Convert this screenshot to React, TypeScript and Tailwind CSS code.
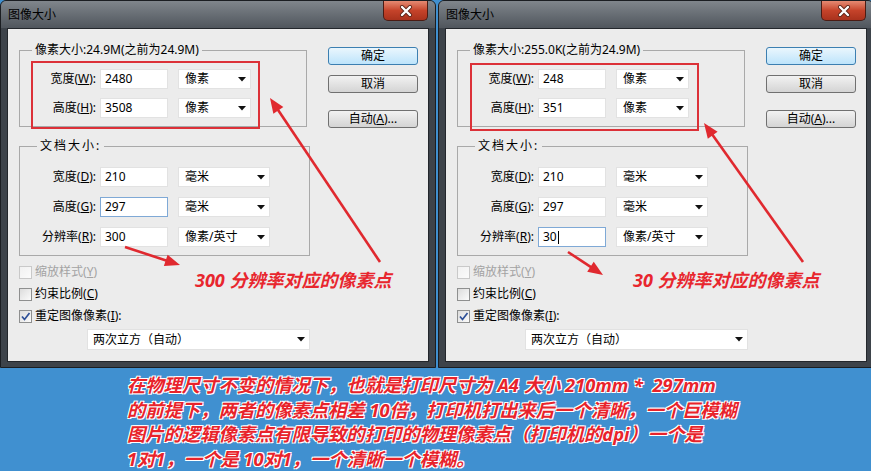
import React from 'react';

type Pt = [number, number];

const RED = '#e0292f';

const Arrow = ({ from, to }: { from: Pt; to: Pt }) => {
  const [x1, y1] = from;
  const [x2, y2] = to;
  const a = Math.atan2(y2 - y1, x2 - x1);
  const len = 15;
  const half = 6;
  const bx = x2 - len * Math.cos(a);
  const by = y2 - len * Math.sin(a);
  const px = -Math.sin(a) * half;
  const py = Math.cos(a) * half;
  return (
    <g>
      <line x1={x1} y1={y1} x2={bx + 2 * Math.cos(a)} y2={by + 2 * Math.sin(a)} stroke={RED} strokeWidth={2.6} />
      <polygon points={`${x2},${y2} ${bx + px},${by + py} ${bx - px},${by - py}`} fill={RED} />
    </g>
  );
};

const Caret = () => (
  <svg width="8" height="5" viewBox="0 0 8 5">
    <path d="M0 0 H8 L4 4.5 Z" fill="#111" />
  </svg>
);

const Select = ({ text, className }: { text: string; className: string }) => (
  <div className={`flex items-center justify-between h-[20px] bg-white border border-[#e2e2e2] pl-[6px] pr-[4px] ${className}`}>
    <span>{text}</span>
    <Caret />
  </div>
);

const Field = ({
  label,
  k,
  value,
  unit,
  unitW,
  focus,
  cursor,
}: {
  label: string;
  k: string;
  value: string;
  unit: string;
  unitW: string;
  focus?: boolean;
  cursor?: boolean;
}) => (
  <div className="flex items-center h-[20px]">
    <span className="w-[76px] text-right whitespace-nowrap">
      {label}(<u>{k}</u>):
    </span>
    <div
      className={`ml-[4px] w-[68px] h-[20px] bg-white flex items-center pl-[4px] border ${
        focus ? 'border-[#7fa9d6]' : 'border-[#e2e2e2]'
      }`}
    >
      {value}
      {cursor && <span className="ml-px w-px h-[13px] bg-black" />}
    </div>
    <Select text={unit} className={`ml-[10px] ${unitW}`} />
  </div>
);

const Check = ({ label, k, checked, disabled }: { label: string; k: string; checked?: boolean; disabled?: boolean }) => (
  <div className={`flex items-center h-[22px] ${disabled ? 'text-[#a3a3a3]' : ''}`}>
    <div
      className={`w-[13px] h-[13px] border bg-gradient-to-br from-[#dcdcdc] to-[#fbfbfb] flex items-center justify-center ${
        disabled ? 'border-[#c9c9c9] from-[#f1f1f1]' : 'border-[#8e8f8f]'
      }`}
    >
      {checked && (
        <svg width="11" height="11" viewBox="0 0 11 11">
          <path d="M2 5.5 L4.5 8.5 L9.5 2" stroke="#2d4f97" strokeWidth="1.7" fill="none" />
        </svg>
      )}
    </div>
    <span className="ml-[3px]">
      {label}(<u>{k}</u>){checked ? ':' : ''}
    </span>
  </div>
);

const Button = ({ children, primary, className }: { children: React.ReactNode; primary?: boolean; className?: string }) => (
  <div
    className={`w-[90px] h-[18px] rounded-[3px] border flex items-center justify-center ${
      primary
        ? 'border-[#3c7fb1] bg-gradient-to-b from-[#eaf6fd] to-[#bde4fb]'
        : 'border-[#707070] bg-gradient-to-b from-[#f2f2f2] to-[#d4d4d4]'
    } ${className ?? ''}`}
  >
    {children}
  </div>
);

type DialogProps = {
  size: string;
  w: string;
  h: string;
  res: string;
  note: string;
  long: [Pt, Pt];
  short: [Pt, Pt];
  box: [number, number];
  leftFocus?: boolean;
};

const Dialog = ({ size, w, h, res, note, long, short, box, leftFocus }: DialogProps) => (
  <div className="relative w-[436px] h-[368px] shrink-0 rounded-t-[6px] border border-[#1b1e22] bg-[#3d434a] flex flex-col">
    <div className="h-[27px] flex items-center pl-[7px] rounded-t-[5px] bg-gradient-to-b from-[#80868c] to-[#50565d]">
      <span className="text-[12px] text-black">图像大小</span>
    </div>
    <div className="absolute top-0 right-[7px] w-[45px] h-[20px] rounded-b-[5px] border border-t-0 border-[#4b1c14] bg-gradient-to-b from-[#e58a72] via-[#c5432a] to-[#a9321d] flex items-center justify-center">
      <svg width="14" height="12" viewBox="0 0 14 12">
        <path d="M3 2 L11 10 M11 2 L3 10" stroke="#5a2418" strokeWidth="4" strokeLinecap="round" />
        <path d="M3 2 L11 10 M11 2 L3 10" stroke="#fff" strokeWidth="2.4" strokeLinecap="round" />
      </svg>
    </div>
    <div className="mx-[6px] h-[334px] border border-[#23272c] bg-[#ececec] flex">
      <div className="w-[303px] pl-[11px] pt-[12px]">
        <fieldset className="w-[288px] border border-[#a9a9a9] pt-[10px] pb-[8px] flex flex-col gap-[9px]">
          <legend className="ml-[12px] px-[3px] leading-[18px]">像素大小:{size}(之前为24.9M)</legend>
          <Field label="宽度" k="W" value={w} unit="像素" unitW="w-[73px]" />
          <Field label="高度" k="H" value={h} unit="像素" unitW="w-[73px]" />
        </fieldset>
        <fieldset className="mt-[10px] w-[291px] border border-[#a9a9a9] pt-[12px] pb-[8px] flex flex-col gap-[10px]">
          <legend className="ml-[17px] px-[3px] leading-[18px] tracking-[2px]">文档大小:</legend>
          <Field label="宽度" k="D" value="210" unit="毫米" unitW="w-[92px]" />
          <Field label="高度" k="G" value="297" unit="毫米" unitW="w-[92px]" focus={leftFocus} />
          <Field label="分辨率" k="R" value={res} unit="像素/英寸" unitW="w-[92px]" focus={!leftFocus} cursor={!leftFocus} />
        </fieldset>
        <div className="mt-[5px]">
          <Check label="缩放样式" k="Y" disabled />
          <Check label="约束比例" k="C" />
          <Check label="重定图像像素" k="I" checked />
        </div>
        <div className="mt-[2px] ml-[68px] w-[223px] h-[21px] bg-white border border-[#e2e2e2] flex items-center justify-between pl-[5px] pr-[4px]">
          <span>两次立方（自动）</span>
          <Caret />
        </div>
      </div>
      <div className="ml-[17px] pt-[18px]">
        <Button primary>确定</Button>
        <Button className="mt-[10px]">取消</Button>
        <Button className="mt-[17px]">
          自动(<u>A</u>)...
        </Button>
      </div>
    </div>
    <svg className="absolute -left-px -top-px pointer-events-none" width="436" height="368">
      <rect x={box[0]} y={box[1]} width="227" height="66" fill="none" stroke="#dc3138" strokeWidth="2" />
      <Arrow from={long[0]} to={long[1]} />
      <Arrow from={short[0]} to={short[1]} />
    </svg>
    <div className="absolute left-[194px] top-[267px] text-[18px] leading-[24px] font-bold italic text-[#e8262e] whitespace-nowrap">
      {note}
    </div>
  </div>
);

const lines = [
  '在物理尺寸不变的情况下，也就是打印尺寸为 A4 大小 210mm *  297mm',
  '的前提下，两者的像素点相差 10倍，打印机打出来后一个清晰，一个巨模糊',
  '图片的逻辑像素点有限导致的打印的物理像素点（打印机的dpi）一个是',
  '1对1，一个是 10对1，一个清晰一个模糊。',
];

export default function App() {
  return (
    <div className="relative w-[871px] h-[471px] overflow-hidden bg-[#4090d0] font-['Noto_Sans','Noto_Sans_CJK_SC',sans-serif] text-[12px] text-black">
      <div className="flex gap-[2px] h-[368px]">
        <Dialog
          size="24.9M"
          w="2480"
          h="3508"
          res="300"
          note="300 分辨率对应的像素点"
          long={[[380, 262], [270, 98]]}
          short={[[125, 247], [180, 265]]}
          box={[32, 62]}
          leftFocus
        />
        <Dialog
          size="255.0K"
          w="248"
          h="351"
          res="30"
          note="30 分辨率对应的像素点"
          long={[[365, 262], [266, 123]]}
          short={[[130, 252], [165, 275]]}
          box={[33, 64]}
        />
      </div>
      <div className="pl-[127px] pt-[5px] text-[18.3px] leading-[24.5px] font-bold italic text-[#e8232b] [text-shadow:1px_1px_0_#fff,-1px_-1px_0_#fff,1px_-1px_0_#fff,-1px_1px_0_#fff]">
        {lines.map((l) => (
          <div key={l} className="whitespace-pre">
            {l}
          </div>
        ))}
      </div>
    </div>
  );
}
